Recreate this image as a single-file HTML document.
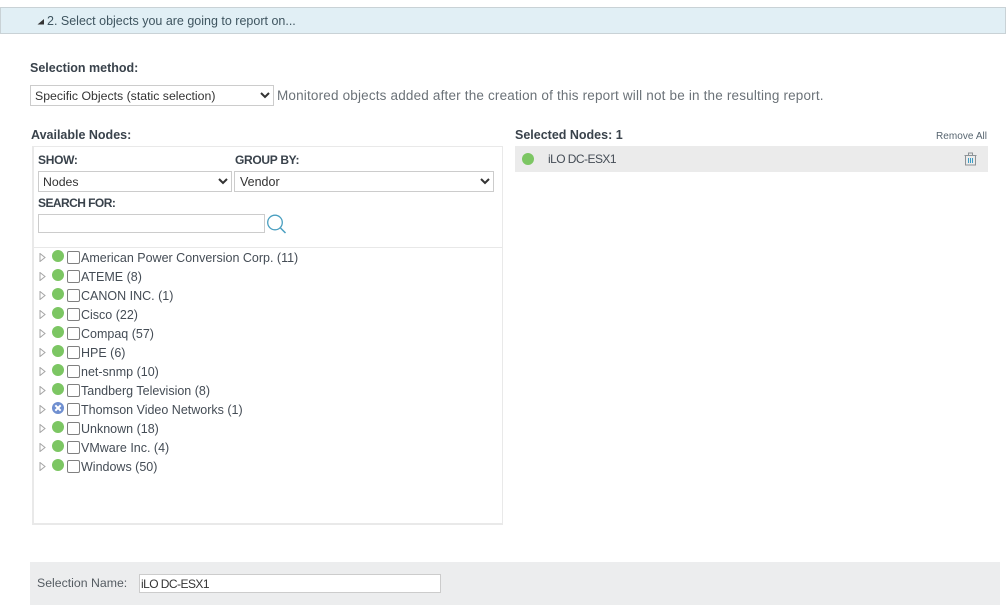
<!DOCTYPE html>
<html><head><meta charset="utf-8"><style>
html,body{margin:0;padding:0;background:#fff;width:1006px;height:614px;overflow:hidden}
body{position:relative;font-family:"Liberation Sans",sans-serif;font-size:12.5px;color:#444c55}
.t{position:absolute;white-space:nowrap;line-height:16px}
.b{font-weight:bold;color:#39424b}
.k{font-size:12px;letter-spacing:-.3px}
.box{position:absolute;box-sizing:border-box}
select{position:absolute;box-sizing:border-box;font-family:"Liberation Sans",sans-serif;font-size:12.3px;color:#333;background:#fff;border:1px solid #ccc;border-radius:0;padding:0;margin:0;outline:0}
input{position:absolute;box-sizing:border-box;border:1px solid #ccc;background:#fff;margin:0;padding:0 1px;font-family:"Liberation Sans",sans-serif;font-size:12px;letter-spacing:-.55px;color:#333}
.c{position:absolute;width:12px;height:12px;border-radius:50%;background:#7cc663}
.cb{position:absolute;left:67px;width:13px;height:13px;box-sizing:border-box;border:1px solid #808080;border-radius:2px;background:#fff}
.a{position:absolute;left:39px;width:7px;height:9px}
</style></head><body>

<div class="box" style="left:0;top:7px;width:1006px;height:27px;background:#e1eff5;border:1px solid #c9d2d6"></div>
<svg class="box" style="left:37px;top:18px" width="8" height="7"><path d="M.5 6.500 L7 1 L7 6.500 Z" fill="#333"/></svg>
<div class="t" style="left:47px;top:13px;color:#3f5560">2. Select objects you are going to report on...</div>

<div class="t b" style="left:30px;top:60px">Selection method:</div>
<select style="left:30px;top:85px;width:244px;height:21px"><option>Specific Objects (static selection)</option></select>
<div class="t" style="left:277px;top:88px;color:#6b7278;font-size:13.5px;letter-spacing:.18px">Monitored objects added after the creation of this report will not be in the resulting report.</div>

<div class="t b" style="left:31px;top:127px">Available Nodes:</div>
<div class="box" style="left:32px;top:146px;width:471px;height:379px;border:1px solid #e9e9e9;border-bottom-width:2px;border-left-width:2px"></div>
<div class="t b k" style="left:38px;top:152px">SHOW:</div>
<div class="t b k" style="left:235px;top:152px">GROUP BY:</div>
<select style="left:38px;top:171px;width:194px;height:21px"><option>Nodes</option></select>
<select style="left:234px;top:171px;width:260px;height:21px;font-size:12.5px;padding-left:1px"><option>Vendor</option></select>
<div class="t b k" style="left:38px;top:195px;letter-spacing:-.55px">SEARCH FOR:</div>
<input style="left:38px;top:214px;width:227px;height:19px">
<svg class="box" style="left:265px;top:212px" width="22" height="24" fill="none" stroke="#4a9fc0"><circle cx="10" cy="10.500" r="7.300" stroke-width="1.300"/><path d="M15.500 16 L20.500 21" stroke-width="1.500"/></svg>
<div class="box" style="left:34px;top:247px;width:468px;height:1px;background:#e8e8e8"></div>

<svg class="a" style="top:253px" viewBox="0 0 7 9"><path d="M1 .5 L6 4.500 L1 8.500Z" fill="#fff" stroke="#a5a5a5"/></svg><div class="c" style="left:52px;top:250px"></div><div class="cb" style="top:251px"></div><div class="t" style="left:81px;top:250px">American Power Conversion Corp. (11)</div>
<svg class="a" style="top:272px" viewBox="0 0 7 9"><path d="M1 .5 L6 4.500 L1 8.500Z" fill="#fff" stroke="#a5a5a5"/></svg><div class="c" style="left:52px;top:269px"></div><div class="cb" style="top:270px"></div><div class="t" style="left:81px;top:269px">ATEME (8)</div>
<svg class="a" style="top:291px" viewBox="0 0 7 9"><path d="M1 .5 L6 4.500 L1 8.500Z" fill="#fff" stroke="#a5a5a5"/></svg><div class="c" style="left:52px;top:288px"></div><div class="cb" style="top:289px"></div><div class="t" style="left:81px;top:288px">CANON INC. (1)</div>
<svg class="a" style="top:310px" viewBox="0 0 7 9"><path d="M1 .5 L6 4.500 L1 8.500Z" fill="#fff" stroke="#a5a5a5"/></svg><div class="c" style="left:52px;top:307px"></div><div class="cb" style="top:308px"></div><div class="t" style="left:81px;top:307px">Cisco (22)</div>
<svg class="a" style="top:329px" viewBox="0 0 7 9"><path d="M1 .5 L6 4.500 L1 8.500Z" fill="#fff" stroke="#a5a5a5"/></svg><div class="c" style="left:52px;top:326px"></div><div class="cb" style="top:327px"></div><div class="t" style="left:81px;top:326px">Compaq (57)</div>
<svg class="a" style="top:348px" viewBox="0 0 7 9"><path d="M1 .5 L6 4.500 L1 8.500Z" fill="#fff" stroke="#a5a5a5"/></svg><div class="c" style="left:52px;top:345px"></div><div class="cb" style="top:346px"></div><div class="t" style="left:81px;top:345px">HPE (6)</div>
<svg class="a" style="top:367px" viewBox="0 0 7 9"><path d="M1 .5 L6 4.500 L1 8.500Z" fill="#fff" stroke="#a5a5a5"/></svg><div class="c" style="left:52px;top:364px"></div><div class="cb" style="top:365px"></div><div class="t" style="left:81px;top:364px">net-snmp (10)</div>
<svg class="a" style="top:386px" viewBox="0 0 7 9"><path d="M1 .5 L6 4.500 L1 8.500Z" fill="#fff" stroke="#a5a5a5"/></svg><div class="c" style="left:52px;top:383px"></div><div class="cb" style="top:384px"></div><div class="t" style="left:81px;top:383px">Tandberg Television (8)</div>
<svg class="a" style="top:405px" viewBox="0 0 7 9"><path d="M1 .5 L6 4.500 L1 8.500Z" fill="#fff" stroke="#a5a5a5"/></svg><svg class="box" style="left:52px;top:402px" width="12" height="12"><circle cx="6" cy="6" r="6" fill="#6f8fd0"/><path d="M3.300 3.300 L8.700 8.700 M8.700 3.300 L3.300 8.700" stroke="#fff" stroke-width="2"/></svg><div class="cb" style="top:403px"></div><div class="t" style="left:81px;top:402px">Thomson Video Networks (1)</div>
<svg class="a" style="top:424px" viewBox="0 0 7 9"><path d="M1 .5 L6 4.500 L1 8.500Z" fill="#fff" stroke="#a5a5a5"/></svg><div class="c" style="left:52px;top:421px"></div><div class="cb" style="top:422px"></div><div class="t" style="left:81px;top:421px">Unknown (18)</div>
<svg class="a" style="top:443px" viewBox="0 0 7 9"><path d="M1 .5 L6 4.500 L1 8.500Z" fill="#fff" stroke="#a5a5a5"/></svg><div class="c" style="left:52px;top:440px"></div><div class="cb" style="top:441px"></div><div class="t" style="left:81px;top:440px">VMware Inc. (4)</div>
<svg class="a" style="top:462px" viewBox="0 0 7 9"><path d="M1 .5 L6 4.500 L1 8.500Z" fill="#fff" stroke="#a5a5a5"/></svg><div class="c" style="left:52px;top:459px"></div><div class="cb" style="top:460px"></div><div class="t" style="left:81px;top:459px">Windows (50)</div>

<div class="t b" style="left:515px;top:127px">Selected Nodes: 1</div>
<div class="t" style="left:936px;top:129px;font-size:10px;letter-spacing:.05px;color:#56646f">Remove All</div>
<div class="box" style="left:515px;top:146px;width:473px;height:26px;background:#ebebeb"></div>
<div class="c" style="left:522px;top:153px"></div>
<div class="t" style="left:548px;top:151px;font-size:12px;letter-spacing:-.55px">iLO DC-ESX1</div>
<svg class="box" style="left:964px;top:152px" width="13" height="14" fill="none"><path d="M.5 3.500H12.500M1.500 4V13H11.500V4M4.500 3V1H8.500V3" stroke="#8c9296"/><path d="M4.500 6V11M6.500 6V11M8.500 6V11" stroke="#3b9cc4" stroke-width="1"/></svg>

<div class="box" style="left:30px;top:562px;width:970px;height:43px;background:#ecedee"></div>
<div class="t" style="left:37px;top:575px;color:#555c62;font-size:12.3px">Selection Name:</div>
<input style="left:139px;top:574px;width:302px;height:19px" value="iLO DC-ESX1">
</body></html>
